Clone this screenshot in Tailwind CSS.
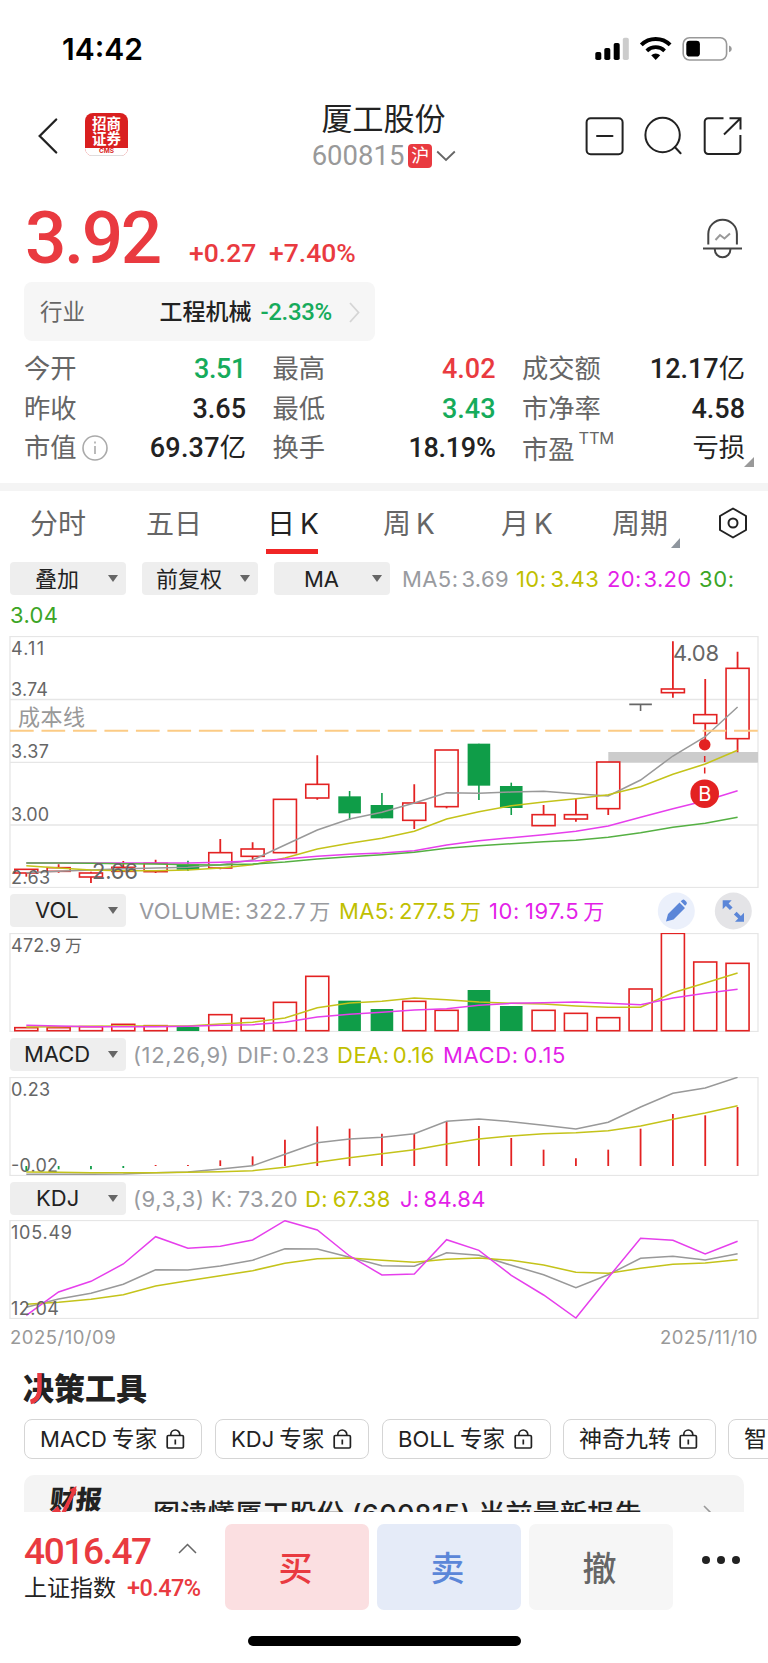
<!DOCTYPE html>
<html lang="zh-CN">
<head>
  <meta charset="UTF-8">
  <meta name="viewport" content="width=device-width, initial-scale=1.0">
  <title>厦工股份 600815</title>
  <script src="https://cdn.jsdelivr.net/npm/@tailwindcss/browser@4"></script>
</head>
<body class="bg-white">
<div class="relative w-[768px] h-[1663px] overflow-hidden flex flex-col bg-white text-[#222] font-[Inter,'Noto_Sans_CJK_SC',sans-serif] whitespace-nowrap">

  <!-- status bar -->
  <div class="h-[98px] shrink-0 flex items-center justify-between pl-[62px] pr-[36px]">
    <span class="text-[30px] font-semibold text-black">14:42</span>
    <svg class="w-[138px] h-[26px]" viewBox="594 36 138 26" fill="none">
      <rect x="595.3" y="52" width="6" height="8" rx="1.8" fill="#000"/>
      <rect x="604.3" y="48" width="6" height="12" rx="1.8" fill="#000"/>
      <rect x="613.7" y="43" width="6" height="17" rx="1.8" fill="#000"/>
      <rect x="622.8" y="37.8" width="6" height="22.2" rx="1.8" fill="#ccc"/>
      <path d="M641.3 44.8a20.5 20.5 0 0 1 28.8 0" stroke="#000" stroke-width="4"/>
      <path d="M646.8 50.8a12.8 12.8 0 0 1 17.8 0" stroke="#000" stroke-width="3.8"/>
      <path d="M651.2 55.2a7 7 0 0 1 9 0l-4.5 4.8z" fill="#000"/>
      <rect x="683.2" y="37.8" width="43.4" height="22.2" rx="6.2" stroke="#999" stroke-width="1.6"/>
      <rect x="686.3" y="40.8" width="13.6" height="15.8" rx="3.4" fill="#000"/>
      <path d="M729 45.5q2.8 1 2.8 3.4t-2.8 3.4z" fill="#999"/>
    </svg>
  </div>

  <!-- header -->
  <div class="h-[88px] shrink-0 flex items-start pl-[37px] pr-[24px] pt-[2px]">
    <div class="w-[206px] flex items-center pt-[14px]">
      <svg class="w-[22px] h-[42px]" viewBox="37 115 22 42" fill="none" stroke="#222" stroke-width="2.3"><path d="M56.2 120.5 39.7 137l16.5 16.5" stroke-linecap="round"/></svg>
      <div class="ml-[26px] -mt-[1px] w-[43px] h-[43px] rounded-[8px] bg-[#d91f1f] overflow-hidden flex flex-col">
        <div class="h-[17px] pt-[2px] text-white text-[14.5px] leading-[15px] font-bold text-center font-['Noto_Sans_CJK_SC',sans-serif]">招商</div>
        <div class="h-[18px] text-white text-[14.5px] leading-[15px] font-bold text-center font-['Noto_Sans_CJK_SC',sans-serif]">证券</div>
        <div class="h-[8px] bg-white border-b border-[#ddd] text-[#d91f1f] text-[6.5px] leading-[7px] font-bold text-center">CMS</div>
      </div>
    </div>
    <div class="flex-1 flex flex-col items-center">
      <div class="text-[31px] leading-[38px] h-[38px] text-[#222]">厦工股份</div>
      <div class="flex items-center h-[34px] pt-[2px] pl-[1px]">
        <span class="text-[27.5px] leading-[34px] text-[#999] font-[Roboto,sans-serif]">600815</span>
        <span class="ml-[4px] w-[24px] h-[24px] rounded-[4px] bg-[#e93a40] text-white text-[18px] leading-[23px] text-center">沪</span>
        <svg class="ml-[4px] w-[20px] h-[12px]" viewBox="0 0 20 12" fill="none" stroke="#666" stroke-width="1.8"><path d="m1.2 1.5 8.8 8.5 8.8-8.5"/></svg>
      </div>
    </div>
    <div class="w-[220px] flex justify-end pt-[15px]">
      <svg class="w-[160px] h-[42px]" viewBox="584 115 160 42" fill="none" stroke="#222" stroke-width="2">
        <rect x="586.6" y="118.2" width="36" height="36" rx="4"/>
        <path d="M597 136h15.5" stroke-linecap="round"/>
        <circle cx="662.6" cy="135" r="17.2"/>
        <path d="m674.8 147 5.8 6.2" stroke-linecap="round"/>
        <path d="M723.5 118.3h-15.3a3.5 3.5 0 0 0-3.5 3.5v28.7a3.5 3.5 0 0 0 3.5 3.5h28.7a3.5 3.5 0 0 0 3.5-3.5V135M729.5 118.3h11v11.2M740.5 118.3 724 134.5"/>
      </svg>
    </div>
  </div>

  <!-- price -->
  <div class="h-[96px] shrink-0 flex items-start pl-[25px] pr-[26px] text-[#e93a40] font-[Roboto,'Noto_Sans_CJK_SC',sans-serif]">
    <span class="w-[164px] text-[73px] leading-[104px] font-medium tracking-[-2.5px]">3.92</span>
    <span class="w-[80px] text-[26.5px] leading-[133px] font-medium">+0.27</span>
    <span class="text-[26.5px] leading-[133px] font-medium">+7.40%</span>
    <svg class="ml-auto mt-[32px] w-[40px] h-[42px]" viewBox="702 218 40 42" fill="none" stroke="#444" stroke-width="2">
      <path d="M708.3 244.5V234a14.3 14.3 0 0 1 28.6 0v10.5M703 248.6h39M714.8 249.5a7.8 7.8 0 0 0 15.6 0"/>
      <path d="m715.5 240 4.5-5 4.5 3.5 5.5-5" stroke="#999"/>
    </svg>
  </div>

  <!-- industry -->
  <div class="ml-[24px] w-[351px] h-[59px] shrink-0 rounded-[8px] bg-[#f6f6f6] flex items-center pl-[16px] pr-[15px] pt-[1px] text-[23px]">
    <span class="text-[#666] text-[22.5px]">行业</span>
    <span class="ml-auto font-medium text-[23px]">工程机械</span>
    <span class="ml-[9px] text-[#16ab5b] text-[24px] font-medium tracking-[-0.3px] font-[Roboto,sans-serif]">-2.33%</span>
    <svg class="ml-[17px] w-[11px] h-[21px]" viewBox="0 0 11 21" fill="none" stroke="#d5d5d5" stroke-width="1.8"><path d="m1 1 8.5 9.5L1 20"/></svg>
  </div>

  <!-- quote figures -->
  <div class="h-[142px] shrink-0 pt-[8px] pl-[24px] pr-[23px] relative text-[26.3px] leading-[40px] font-[Roboto,'Noto_Sans_CJK_SC',sans-serif]">
    <div class="grid grid-cols-[222px_223px_223px] gap-x-[26.5px] auto-rows-[39.7px]">
      <div class="flex justify-between"><span class="text-[#666]">今开</span><span class="text-[#16ab5b] text-[27px] font-medium tracking-[-0.4px]">3.51</span></div>
      <div class="flex justify-between"><span class="text-[#666]">最高</span><span class="text-[#e93a40] text-[27px] font-medium">4.02</span></div>
      <div class="flex justify-between"><span class="text-[#666]">成交额</span><span><span class="text-[27px] font-medium">12.17</span>亿</span></div>
      <div class="flex justify-between"><span class="text-[#666]">昨收</span><span class="text-[27px] font-medium">3.65</span></div>
      <div class="flex justify-between"><span class="text-[#666]">最低</span><span class="text-[#16ab5b] text-[27px] font-medium">3.43</span></div>
      <div class="flex justify-between"><span class="text-[#666]">市净率</span><span class="text-[27px] font-medium">4.58</span></div>
      <div class="flex justify-between"><span class="text-[#666] flex items-center">市值
        <svg class="ml-[5px] w-[26px] h-[26px]" viewBox="0 0 26 26" fill="none" stroke="#aaa" stroke-width="1.6"><circle cx="13" cy="13" r="12"/><path d="M13 11v8M13 6.5v2"/></svg></span><span><span class="text-[27px] font-medium tracking-[0.2px]">69.37</span>亿</span></div>
      <div class="flex justify-between"><span class="text-[#666]">换手</span><span class="text-[27px] font-medium tracking-[-0.3px]">18.19%</span></div>
      <div class="flex justify-between"><span class="text-[#666] flex"><span class="pt-[2px]">市盈</span><span class="ml-[4px] text-[16.5px] leading-[21px] font-[Inter,sans-serif] tracking-[-0.3px]">TTM</span></span><span>亏损</span></div>
    </div>
    <div class="absolute right-[14px] bottom-[16px] w-[10px] h-[10px] bg-[#999] [clip-path:polygon(100%_0,100%_100%,0_100%)]"></div>
  </div>
  <div class="h-[8px] shrink-0 bg-[#f4f4f4]"></div>

  <!-- period tabs -->
  <div class="h-[70px] shrink-0 flex text-[28px] leading-[67px] text-[#666] pl-[30px] relative [word-spacing:-3px]">
    <span class="w-[116px]">分时</span>
    <span class="w-[120px]">五日</span>
    <div class="w-[117px] relative text-[#222] pl-[1px]">日 K<div class="absolute left-0 top-[58px] w-[52px] h-[5px] bg-[#f02525]"></div></div>
    <span class="w-[118px]">周 K</span>
    <span class="w-[111px]">月 K</span>
    <div class="w-[107px] relative">周期<div class="absolute left-[59px] top-[47px] w-[9px] h-[10px] bg-[#8f969e] [clip-path:polygon(100%_0,100%_100%,0_100%)]"></div></div>
    <svg class="mt-[16px] w-[28px] h-[32px]" viewBox="0 0 28 32" fill="none" stroke="#222" stroke-width="2"><path d="M14 1.5 27 9v14L14 30.5 1 23V9z" stroke-linejoin="round"/><circle cx="14" cy="16" r="4.5"/></svg>
  </div>

  <!-- main chart -->
  <div class="h-[75px] shrink-0 flex flex-wrap content-start items-start pl-[10px] text-[22px] leading-[36px]">
    <div class="mt-[1px] mr-[16px] w-[116px] h-[33px] rounded-[4px] bg-[#eee] flex items-center pl-[25px] pr-[8px] justify-between"><span>叠加</span><i class="w-[10px] h-[7px] bg-[#666] [clip-path:polygon(0_0,100%_0,50%_100%)]"></i></div>
    <div class="mt-[1px] mr-[16px] w-[116px] h-[33px] rounded-[4px] bg-[#eee] flex items-center pl-[14px] pr-[8px] justify-between"><span>前复权</span><i class="w-[10px] h-[7px] bg-[#666] [clip-path:polygon(0_0,100%_0,50%_100%)]"></i></div>
    <div class="mt-[1px] mr-[12px] w-[116px] h-[33px] rounded-[4px] bg-[#eee] flex items-center pl-[30px] pr-[8px] justify-between"><span>MA</span><i class="w-[10px] h-[7px] bg-[#666] [clip-path:polygon(0_0,100%_0,50%_100%)]"></i></div>
    <span class="w-[114px] text-[#999ba0] tracking-[0.4px]">MA5:<span class="ml-[3px]">3.69</span></span>
    <span class="w-[91px] text-[#c0bf00] tracking-[0.4px]">10:<span class="ml-[4px]">3.43</span></span>
    <span class="w-[92px] text-[#e31fe8] tracking-[0.3px]">20:<span class="ml-[2px]">3.20</span></span>
    <span class="w-[50px] text-[#3ca526] tracking-[0.6px]">30:</span>
    <span class="text-[#3ca526] tracking-[0.3px]">3.04</span>
  </div>
  <svg id="kline" class="shrink-0 w-[768px] h-[252px]" viewBox="0 0 768 252" fill="none"></svg>

  <!-- volume -->
  <div class="mt-[6px] h-[39px] shrink-0 flex items-start pl-[10px] pr-[16px] text-[22px] leading-[35px]">
    <div class="mr-[13px] w-[116px] h-[33px] rounded-[4px] bg-[#eee] flex items-center pl-[25px] pr-[8px] justify-between"><span>VOL</span><i class="w-[10px] h-[7px] bg-[#666] [clip-path:polygon(0_0,100%_0,50%_100%)]"></i></div>
    <span class="w-[200px] text-[#999ba0] tracking-[0.4px]">VOLUME:<span class="ml-[4px]">322.7</span><span class="ml-[3px] text-[21px]">万</span></span>
    <span class="w-[150px] text-[#c0bf00] tracking-[0.3px]">MA5:<span class="ml-[4px]">277.5</span><span class="ml-[4px] text-[21px]">万</span></span>
    <span class="text-[#e31fe8] tracking-[0.6px]">10:<span class="ml-[5px]">197.5</span><span class="ml-[4px] text-[21px]">万</span></span>
    <svg class="ml-auto -mt-[2px] w-[95px] h-[38px]" viewBox="657 892 95 38">
      <circle cx="676.3" cy="911" r="18.5" fill="#ebf0fb"/>
      <circle cx="733.3" cy="911" r="18.5" fill="#e4e4e7"/>
      <path d="m666 921.5 2-7.5 11.5-11.5 5.5 5.5-11.5 11.5zM680.7 901.3l1.6-1.4q1.3-.9 2.5.3l1.5 1.6q1.2 1.3.2 2.5l-1.4 1.5z" fill="#5b86d8"/>
      <path d="M722.7 900.3h9l-3.1 3.1 4 4-2.7 2.7-4-4-3.2 3.2zM744 921.7h-9l3.2-3.2-4.3-4 2.7-2.7 4.2 4.2 3.2-3.2z" fill="#5b86d8"/>
    </svg>
  </div>
  <svg id="vol" class="shrink-0 w-[768px] h-[99px]" viewBox="0 0 768 99" fill="none"></svg>

  <!-- macd -->
  <div class="mt-[6px] h-[39px] shrink-0 flex items-start pl-[10px] text-[22px] leading-[35px]">
    <div class="mr-[7px] w-[116px] h-[33px] rounded-[4px] bg-[#eee] flex items-center pl-[14px] pr-[8px] justify-between"><span>MACD</span><i class="w-[10px] h-[7px] bg-[#666] [clip-path:polygon(0_0,100%_0,50%_100%)]"></i></div>
    <span class="w-[104px] text-[#999ba0] tracking-[0.6px]">(12,26,9)</span>
    <span class="w-[100px] text-[#999ba0] tracking-[0.2px]">DIF:<span class="ml-[3px]">0.23</span></span>
    <span class="w-[106px] text-[#c0bf00] tracking-[0.5px]">DEA:<span class="ml-[3px]">0.16</span></span>
    <span class="text-[#e31fe8] tracking-[0.6px]">MACD:<span class="ml-[5px]">0.15</span></span>
  </div>
  <svg id="macd" class="shrink-0 w-[768px] h-[99px]" viewBox="0 0 768 99" fill="none"></svg>

  <!-- kdj -->
  <div class="mt-[6px] h-[38px] shrink-0 flex items-start pl-[10px] text-[22px] leading-[35px]">
    <div class="mr-[7px] w-[116px] h-[33px] rounded-[4px] bg-[#eee] flex items-center pl-[26px] pr-[8px] justify-between"><span>KDJ</span><i class="w-[10px] h-[7px] bg-[#666] [clip-path:polygon(0_0,100%_0,50%_100%)]"></i></div>
    <span class="w-[78px] text-[#999ba0] tracking-[0.6px]">(9,3,3)</span>
    <span class="w-[94px] text-[#999ba0] tracking-[0.3px]">K:<span class="ml-[5px]">73.20</span></span>
    <span class="w-[95px] text-[#c0bf00] tracking-[0.3px]">D:<span class="ml-[5px]">67.38</span></span>
    <span class="text-[#e31fe8] tracking-[0.3px]">J:<span class="ml-[4px]">84.84</span></span>
  </div>
  <svg id="kdj" class="shrink-0 w-[768px] h-[99px]" viewBox="0 0 768 99" fill="none"></svg>
  <div class="h-[34px] shrink-0 flex justify-between pl-[10px] pr-[10px] text-[18.5px] leading-[36px] text-[#999] tracking-[0.5px]"><span>2025/10/09</span><span>2025/11/10</span></div>

  <!-- tools -->
  <div class="h-[66px] shrink-0 pl-[23px] pt-[13px] text-[31px] leading-[46px] font-black">
    <span class="relative inline-block">决策工具<svg class="absolute left-[6px] top-[7px] w-[14px] h-[32px]" viewBox="0 0 14 32" fill="none" stroke="#e93a40" stroke-width="4.5"><path d="M10.5 0v15q0 12-9 14"/></svg></span>
  </div>
  <div class="h-[40px] shrink-0 flex gap-[13px] pl-[24px] text-[22px] leading-[38px]">
    <div class="w-[178px] shrink-0 border border-[#d5d5d5] rounded-[8px] pl-[15px] flex items-center tracking-[0.2px]">MACD<span class="ml-[5px] text-[22.5px]">专家</span><svg class="ml-[9px] w-[19px] h-[20px]" viewBox="0 0 19 20" fill="none" stroke="#222" stroke-width="1.7"><rect x="1.2" y="6.5" width="16.2" height="12.5" rx="1.2"/><path d="M4.8 6.5v-1a4.5 4.5 0 0 1 9 0v1M9.3 10.5v5"/></svg></div>
    <div class="w-[154px] shrink-0 border border-[#d5d5d5] rounded-[8px] pl-[15px] flex items-center">KDJ<span class="ml-[5px] text-[22.5px]">专家</span><svg class="ml-[9px] w-[19px] h-[20px]" viewBox="0 0 19 20" fill="none" stroke="#222" stroke-width="1.7"><rect x="1.2" y="6.5" width="16.2" height="12.5" rx="1.2"/><path d="M4.8 6.5v-1a4.5 4.5 0 0 1 9 0v1M9.3 10.5v5"/></svg></div>
    <div class="w-[169px] shrink-0 border border-[#d5d5d5] rounded-[8px] pl-[15px] flex items-center tracking-[0.2px]">BOLL<span class="ml-[5px] text-[22.5px]">专家</span><svg class="ml-[9px] w-[19px] h-[20px]" viewBox="0 0 19 20" fill="none" stroke="#222" stroke-width="1.7"><rect x="1.2" y="6.5" width="16.2" height="12.5" rx="1.2"/><path d="M4.8 6.5v-1a4.5 4.5 0 0 1 9 0v1M9.3 10.5v5"/></svg></div>
    <div class="w-[153px] -ml-[1px] shrink-0 border border-[#d5d5d5] rounded-[8px] pl-[15px] flex items-center text-[23px]">神奇九转<svg class="ml-[8px] w-[19px] h-[20px]" viewBox="0 0 19 20" fill="none" stroke="#222" stroke-width="1.7"><rect x="1.2" y="6.5" width="16.2" height="12.5" rx="1.2"/><path d="M4.8 6.5v-1a4.5 4.5 0 0 1 9 0v1M9.3 10.5v5"/></svg></div>
    <div class="w-[153px] -ml-[1px] shrink-0 border border-[#d5d5d5] rounded-[8px] pl-[15px] flex items-center text-[23px]">智</div>
  </div>
  <div class="mt-[16px] h-[37px] shrink-0 overflow-hidden px-[24px]">
    <div class="h-[78px] rounded-[10px] bg-[#f4f4f4] flex items-start">
      <span class="relative ml-[26px] w-[103px] mt-[8px] text-[26px] leading-[34px] font-black -skew-x-6">财报<svg class="absolute left-[1px] top-[3px] w-[26px] h-[34px]" viewBox="0 0 26 34" fill="none" stroke="#e93a40" stroke-width="4"><path d="m1 30 6-7 5 8L23 3"/><path d="M17 4l7-4v9" fill="#e93a40" stroke="none"/></svg></span>
      <span class="text-[27px] leading-[79px] font-medium tracking-[0.3px]">图读懂厦工股份 (600815) 当前最新报告</span>
      <svg class="ml-auto mr-[31px] mt-[30px] w-[10px] h-[18px]" viewBox="0 0 10 18" fill="none" stroke="#999" stroke-width="1.6"><path d="m1 1 8 8-8 8"/></svg>
    </div>
  </div>

  <!-- bottom bar -->
  <div class="h-[98px] shrink-0 flex pt-[12px] pl-[24px]">
    <div class="w-[201px] font-[Roboto,'Noto_Sans_CJK_SC',sans-serif]">
      <div class="h-[52px] flex items-center text-[37px] leading-[54px] text-[#e93a40]"><span class="tracking-[-1.4px] w-[154px] font-medium pt-[3px]">4016.47</span><svg class="w-[19px] h-[11px] -mt-[3px]" viewBox="0 0 19 11" fill="none" stroke="#666" stroke-width="1.5"><path d="m1 10 8.5-8.5L18 10"/></svg></div>
      <div class="h-[26px] text-[23px] leading-[24px]">上证指数<span class="ml-[11px] text-[23.5px] font-medium text-[#e93a40] tracking-[-0.6px]">+0.47%</span></div>
    </div>
    <div class="flex gap-[8px] text-[34px] leading-[89px] text-center font-medium">
      <div class="w-[144px] h-[86px] pr-[3px] rounded-[7px] bg-[#fbdfe1] text-[#e93a40]">买</div>
      <div class="w-[144px] h-[86px] pr-[3px] rounded-[7px] bg-[#e5ebf8] text-[#5b86d8]">卖</div>
      <div class="w-[144px] h-[86px] pr-[3px] rounded-[7px] bg-[#f6f6f6] text-[#666]">撤</div>
    </div>
    <div class="ml-[29px] mt-[32px] flex gap-[7px]">
      <i class="w-[8px] h-[8px] rounded-full bg-[#222]"></i><i class="w-[8px] h-[8px] rounded-full bg-[#222]"></i><i class="w-[8px] h-[8px] rounded-full bg-[#222]"></i>
    </div>
  </div>
  <div class="mt-[26px] mx-auto w-[273px] h-[10px] shrink-0 rounded-full bg-black"></div>
</div>

<script>
  const RED = '#e32222', GREEN = '#0f9d48', GRAY = '#999', YELLOW = '#c4c31a', PINK = '#e63fec', LIME = '#55b043';
  const cx = i => 26.3 + i * 32.33;

  // series are kept in thirds of a pixel, off is the panel offset
  const line = (pts, off, color) =>
    `<polyline points="${pts.map((v, i) => cx(i).toFixed(1) + ',' + (v / 3 - off).toFixed(1)).join(' ')}" stroke="${color}" stroke-width="1.5"/>`;
  const box = h => `<rect x="10" y="0.5" width="748" height="${h}" stroke="#e6e6e6" stroke-width="1.3"/>`;
  const label = (x, y, t, w, size = 18, color = '#666') =>
    `<text x="${x}" y="${y}" font-size="${size}" fill="${color}" textLength="${w}">${t}</text>`;

  // [top, bottom, high, low, color]
  const candles = [
    [718,729,718,740,'r'],[713,724,703,728,'r'],[729,741,725,759,'r'],[712,724,693,724,'r'],[700,725,689,729,'r'],
    [703,719,692,723,'g'],[668,714,627,718,'r'],[657,679,637,690,'r'],[508,668,508,668,'r'],[463,504,376,509,'r'],
    [499,550,483,570,'g'],[525,565,489,565,'g'],[519,571,463,597,'r'],[360,530,360,535,'r'],[341,467,341,510,'g'],
    [468,534,458,555,'g'],[554,587,525,587,'r'],[554,567,506,575,'r'],[396,536,396,555,'r'],[223,223,223,243,'k'],
    [177,188,34,203,'r'],[254,280,147,330,'r'],[115,326,65,367,'r']
  ];
  let s = box(251);
  [63.5, 126.3, 189].forEach(y => s += `<path d="M10 ${y}h748" stroke="#e6e6e6" stroke-width="1.3"/>`);
  s += `<rect x="608.3" y="116" width="149.7" height="10.5" fill="#ccc"/>`;
  candles.forEach(([t, b, hi, lo, c], i) => {
    const x = cx(i), y = v => v / 3 - 6;
    if (c === 'k') {
      s += `<path d="M${x - 11.3} ${y(t)}h22.6M${x} ${y(t)}V${y(lo)}" stroke="#666" stroke-width="1.6"/>`;
    } else if (c === 'g') {
      s += `<path d="M${x} ${y(hi)}V${y(lo)}" stroke="${GREEN}" stroke-width="1.6"/><rect x="${x - 11.3}" y="${y(t)}" width="22.6" height="${(b - t) / 3}" fill="${GREEN}"/>`;
    } else {
      s += `<path d="M${x} ${y(hi)}V${y(t)}M${x} ${y(b)}V${y(lo)}" stroke="${RED}" stroke-width="1.8"/><rect x="${x - 11.5}" y="${y(t)}" width="23" height="${(b - t) / 3}" stroke="${RED}" stroke-width="1.6"/>`;
    }
  });
  s += line([728,724,720,716,714,712,704,690,645,600,567,547,519,488,490,486,484,491,498,450,378,320,231], 6, GRAY);
  s += line([707,714,720,722,722,720,714,704,684,657,640,625,604,567,545,527,516,506,494,470,433,402,361], 6, YELLOW);
  s += line([699,699,699,699,699,699,697,693,687,679,673,669,662,645,632,623,614,604,588,562,536,512,482], 6, PINK);
  s += line([699,699,700,701,702,704,705,702,696,687,680,674,667,655,647,641,635,631,622,608,592,580,562], 6, LIME);
  s += `<path d="M10 94.7h748" stroke="#fccb85" stroke-width="2" stroke-dasharray="23.7 7.78"/>`;
  s += label(11, 18.5, '4.11', 33) + label(11, 59.5, '3.74', 37) + label(11, 122, '3.37', 38) + label(11, 185, '3.00', 38) + label(11, 248, '2.63', 39);
  s += label(18, 89, '成本线', 67, 22, '#999') + label(92, 243, '2.66', 46, 22) + label(673, 24.5, '4.08', 46, 22);
  s += `<circle cx="704.7" cy="108.7" r="5.8" fill="${RED}"/><path d="M704.7 120v18" stroke="${RED}" stroke-width="1.5" stroke-dasharray="6 5.5"/>`;
  s += `<circle cx="704.7" cy="157.7" r="14.3" fill="${RED}"/><text x="704.9" y="165" font-size="20" fill="#fff" text-anchor="middle">B</text>`;
  document.getElementById('kline').innerHTML = s;

  const vols = [413,413,410,403,407,-411,374,385,337,259,-332,-357,334,361,-300,-348,361,370,383,297,130,216,220];
  s = box(98);
  vols.forEach((v, i) => {
    const y = Math.abs(v) / 3 - 43;
    s += v < 0
      ? `<rect x="${cx(i) - 11.3}" y="${y}" width="22.6" height="${98 - y}" fill="${GREEN}"/>`
      : `<rect x="${cx(i) - 11.5}" y="${y}" width="23" height="${97.7 - y}" stroke="${RED}" stroke-width="1.6"/>`;
  });
  s += line([411,410,409,408,408,408,402,397,384,353,339,334,324,329,336,340,342,348,352,352,308,279,249], 43, YELLOW);
  s += line([406,408,410,410,410,409,406,404,397,381,373,367,360,356,346,340,338,336,340,344,324,310,298], 43, PINK);
  s += label(11, 19, '472.9', 50) + label(65, 19, '万', 17, 17);
  document.getElementById('vol').innerHTML = s;

  const hist = [842,838,838,834,825,825,811,799,749,709,716,731,732,694,708,744,779,805,779,716,672,676,651];
  s = box(98) + label(11, 18.5, '0.23', 39) + label(11, 94.5, '-0.02', 47);
  hist.forEach((v, i) => s += `<path d="M${cx(i)} ${v / 3 - 187}V89" stroke="${v > 828 ? GREEN : RED}" stroke-width="1.8"/>`);
  s += line([853,853,853,852,848,846,837,827,793,758,747,742,731,694,687,695,706,717,697,651,610,594,562], 187, GRAY);
  s += line([846,847,848,848,848,847,845,842,832,817,803,791,779,762,747,738,731,728,722,708,688,669,647], 187, YELLOW);
  document.getElementById('macd').innerHTML = s;

  s = box(98);
  s += line([412,387,370,343,299,300,288,271,236,237,262,287,289,248,256,286,314,353,314,265,259,270,251], 50, GRAY);
  s += line([403,397,388,374,348,332,317,302,280,266,264,271,277,268,264,271,285,307,310,295,283,279,269], 50, YELLOW);
  s += line([436,366,334,282,200,235,229,210,152,180,258,315,312,209,241,316,375,444,323,205,211,252,214], 50, PINK);
  s += label(11, 18.5, '105.49', 61) + label(11, 94.5, '12.04', 48);
  document.getElementById('kdj').innerHTML = s;
</script>
</body>
</html>
